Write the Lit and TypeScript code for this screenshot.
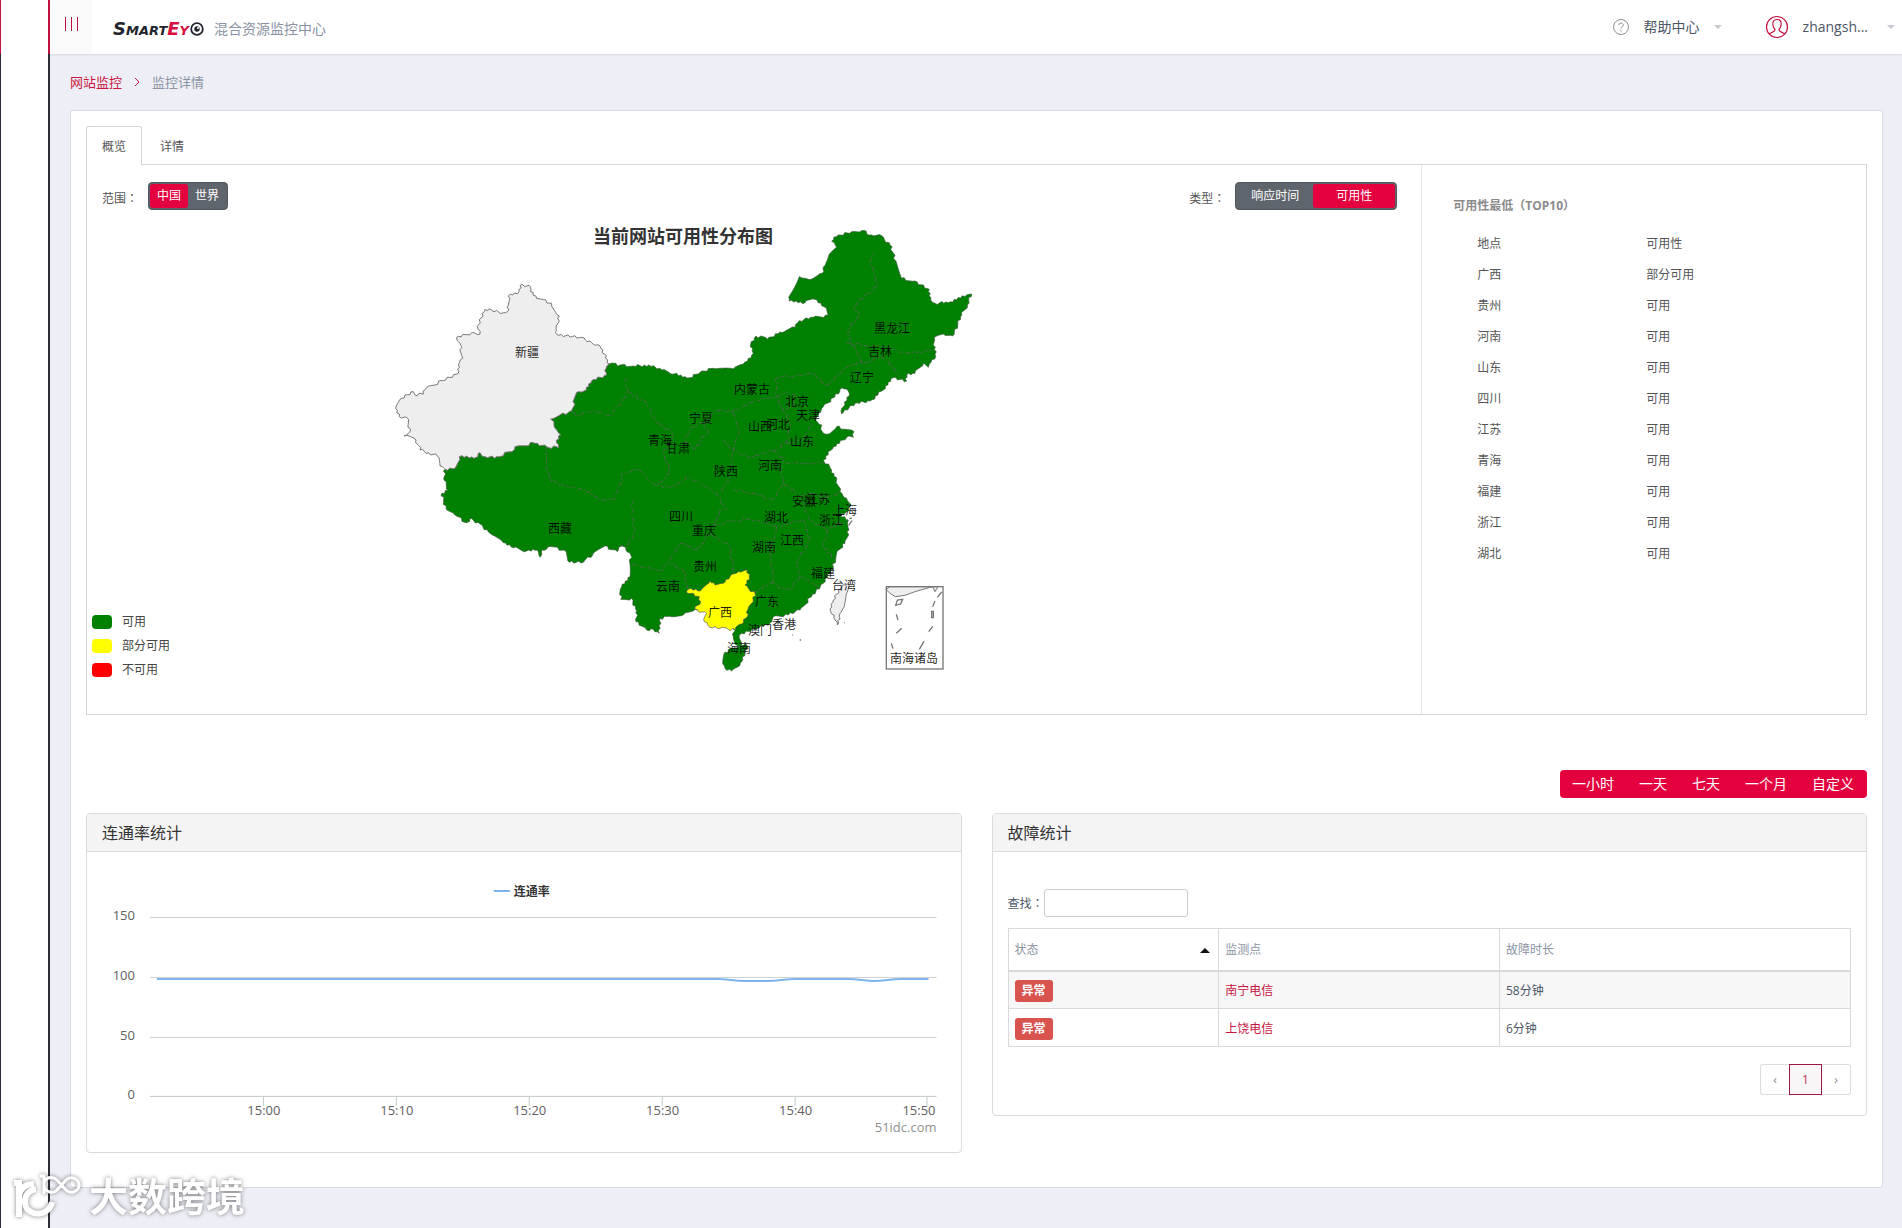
import { LitElement, html, svg, css } from "lit";
import { customElement, state } from "lit/decorators.js";
import { classMap } from "lit/directives/class-map.js";

type Pt = [number, number];

/** Parses "x,y x,y ..." into points. */
const parse = (s: string): Pt[] =>
  s.trim().split(/\s+/).map((p) => p.split(",").map(Number) as Pt);

/** Breaks long edges into short uneven steps so borders look like surveyed lines. */
function rough(src: string, close = true): string {
  const pts = parse(src);
  const out: string[] = [];
  const count = close ? pts.length : pts.length - 1;
  for (let i = 0; i < count; i++) {
    const a = pts[i];
    const b = pts[(i + 1) % pts.length];
    const len = Math.hypot(b[0] - a[0], b[1] - a[1]);
    const n = Math.max(1, Math.round(len / 7));
    const flip = a[0] + a[1] > b[0] + b[1] ? -1 : 1;
    for (let k = 0; k < n; k++) {
      const t = k / n;
      const id = flip > 0 ? k : n - k;
      const seed = Math.sin((a[0] + b[0]) * 12.9 + (a[1] + b[1]) * 78.2 + id * 37.7) * 43758.5;
      const j = k === 0 ? 0 : ((seed - Math.floor(seed)) * 2 - 1) * 4.6 * flip;
      const x = a[0] + (b[0] - a[0]) * t - ((b[1] - a[1]) / len) * j;
      const y = a[1] + (b[1] - a[1]) * t + ((b[0] - a[0]) / len) * j;
      out.push(`${x.toFixed(1)},${y.toFixed(1)}`);
    }
  }
  if (!close) out.push(pts[pts.length - 1].join(","));
  return out.join(" ");
}

const XINJIANG_SOUTH =
  "195,778 225,775 238,740 282,745 300,728 315,740 350,740 400,722 412,708 465,700 500,710 535,713 530,690 542,675 525,655 522,635 512,627 575,603 590,547 612,543 635,512 680,495 678,475 688,462";

const XINJIANG =
  XINJIANG_SOUTH +
  " 660,408 640,403 605,382 530,373 528,355 538,318 515,280 470,265 452,245 447,226 420,227 417,245 385,258 387,300 370,308 315,298 292,350 300,372 275,368 230,382 240,400 248,445 235,465 235,490 190,512 140,532 130,552 105,555 100,545 60,568 47,595 58,620 80,622 90,665 72,678 108,690 120,720 172,738 180,768";

const MAINLAND =
  XINJIANG_SOUTH +
  " 720,465 760,468 820,467 845,480 870,490 915,500 930,503 960,487 1000,475 1060,477 1090,462 1120,430 1112,402 1128,378 1162,388 1200,366 1245,352 1258,332 1300,322 1345,316 1332,290 1305,268 1275,278 1228,273 1226,262 1258,200 1285,208 1327,190 1331,170 1345,140 1370,112 1355,94 1375,75 1415,65 1445,62 1475,75 1505,77 1530,105 1545,150 1565,205 1605,213 1648,238 1652,270 1665,280 1705,278 1760,255 1775,252 1762,285 1745,315 1718,378 1690,372 1662,383 1667,440 1648,462 1645,472 1630,460 1605,490 1580,495 1580,513 1540,503 1510,540 1470,573 1425,580 1385,612 1390,590 1408,550 1400,537 1380,538 1365,560 1330,590 1315,610 1308,632 1325,645 1327,665 1340,673 1370,650 1422,665 1420,682 1400,682 1360,710 1330,750 1355,780 1370,810 1380,845 1400,865 1412,888 1400,905 1380,918 1405,930 1407,960 1395,1000 1370,1030 1360,1070 1330,1120 1295,1160 1260,1200 1225,1215 1180,1220 1170,1240 1130,1255 1085,1270 1078,1285 1083,1308 1065,1302 1060,1280 1065,1262 1020,1200 945,1198 910,1215 875,1220 840,1225 838,1270 820,1258 800,1260 768,1235 770,1202 755,1165 722,1168 725,1130 750,1100 752,1035 738,1020 725,1000 712,1025 675,1008 640,1030 610,1057 568,1057 552,1020 505,1010 485,1020 480,1042 472,1020 440,1023 400,1013 370,998 330,970 300,942 270,925 260,938 225,915 198,895 185,850 205,842 192,810";

const GUANGXI =
  "1065,1260 1045,1258 1020,1255 990,1252 973,1235 980,1210 945,1198 945,1190 962,1175 958,1160 920,1148 925,1138 962,1142 990,1113 1005,1125 1030,1120 1050,1100 1075,1085 1102,1080 1108,1100 1095,1125 1125,1150 1120,1175 1105,1195 1102,1220 1085,1242";

const HAINAN = "1030,1340 1045,1320 1075,1310 1100,1304 1095,1330 1085,1355 1075,1370 1055,1383 1035,1375 1028,1355";
const TAIWAN = "1405,1120 1385,1130 1360,1170 1352,1205 1365,1230 1372,1245 1378,1220 1393,1190 1400,1150";

const BORDERS = [
  "500,710 498,770 515,815 560,828 620,845 665,870 705,865 730,790 775,780 830,828 885,830 925,800 1010,850 1040,900",
  "755,870 762,970 738,1020",
  "735,505 745,545 690,620 640,600 590,620 575,603",
  "745,545 800,580 830,640 870,660 880,690 850,720 870,790 830,828",
  "970,640 935,650 915,690 945,720 960,690 985,670 970,640",
  "970,640 1010,600 1060,605 1130,570 1190,560 1190,500 1240,500 1300,490 1340,530 1400,470 1450,460 1400,370 1440,310 1420,290 1490,230 1470,160 1480,130",
  "1450,460 1510,440 1560,500",
  "1400,400 1500,410 1590,430 1660,420",
  "1030,690 1060,720 1050,800 1020,850",
  "1060,605 1075,660 1060,720 1110,745 1180,720 1220,700 1230,640 1190,560",
  "1190,560 1220,545 1250,560 1235,590 1210,600",
  "1220,700 1270,690 1300,640",
  "1180,720 1220,760 1270,760 1330,758",
  "1060,840 1120,850 1180,870 1210,820 1200,760",
  "1210,820 1260,860 1290,930 1340,960 1400,930",
  "1260,860 1300,850 1330,870 1380,845",
  "1020,900 1000,950 1060,930 1130,930 1190,950 1270,930",
  "755,1060 820,1080 850,1080 870,1050 900,1000 950,1020 990,970",
  "990,970 1050,1010 1060,1090",
  "925,1138 910,1080 870,1060",
  "1125,1150 1170,1120 1230,1140 1260,1100 1320,1130",
  "1190,950 1170,1020 1180,1120",
  "1270,930 1290,990 1250,1060 1260,1100",
  "1340,960 1330,1010 1365,1050",
];

const NINE_DASH = [
  "707,556 712,540 728,538 722,552",
  "709,583 714,600",
  "709,640 725,625",
  "694,670 699,686",
  "778,688 792,664",
  "806,635 818,619",
  "815,574 820,574 820,593 815,593",
  "818,560 825,543",
  "832,532 845,516",
];

const LABELS: [string, number, number][] = [
  ["新疆", 527, 353], ["黑龙江", 892, 329], ["吉林", 880, 352], ["辽宁", 862, 378],
  ["内蒙古", 752, 390], ["北京", 797, 402], ["天津", 808, 416], ["宁夏", 701, 419],
  ["山西", 760, 427], ["河北", 778, 425], ["山东", 802, 442], ["青海", 660, 441],
  ["甘肃", 678, 449], ["陕西", 726, 472], ["河南", 770, 466], ["四川", 681, 517],
  ["重庆", 704, 531], ["西藏", 560, 529], ["安徽", 804, 502], ["江苏", 818, 500],
  ["上海", 845, 511], ["浙江", 831, 521], ["湖北", 776, 518], ["湖南", 764, 548],
  ["江西", 792, 541], ["贵州", 705, 567], ["云南", 668, 587], ["广西", 720, 613],
  ["福建", 823, 574], ["台湾", 844, 586], ["广东", 767, 602], ["香港", 784, 625],
  ["澳门", 760, 631], ["海南", 739, 649], ["南海诸岛", 914, 659],
];

const FONT = css`
  :host {
    font-family: "Open Sans", "Noto Sans CJK SC", sans-serif;
    font-size: 12px;
    line-height: 24px;
    color: #4c5667;
  }
  button, input { font: inherit; }
  * { box-sizing: border-box; }
`;

@customElement("china-map")
class ChinaMap extends LitElement {
  static styles = [FONT, css`
    :host { display: block; width: 600px; }
    svg { display: block; }
    .title { font-size: 18px; font-weight: 700; fill: #333; text-anchor: middle; }
    .name { font-size: 12px; fill: #000; fill-opacity: 0.88; text-anchor: middle; }
    .ok { fill: #008000; stroke: #3c5a3c; stroke-width: 2; }
    .part { fill: #ff0; stroke: #555; stroke-width: 2; }
    .none { fill: #eee; stroke: #777; stroke-width: 3; }
    .line { fill: none; stroke: #4f6650; stroke-width: 3; stroke-dasharray: 14 5 6 5; }
    .frame { fill: none; stroke: #777; stroke-width: 4; }
    .dash { fill: none; stroke: #777; stroke-width: 4; }
  `];

  render() {
    return html`
      <svg width="600" height="476" viewBox="380 214 600 476" role="img" aria-label="当前网站可用性分布图">
        <svg x="380" y="210" width="600" height="480" viewBox="0 0 1800 1440">
          <polygon class="ok" points=${rough(MAINLAND)}></polygon>
          <polygon class="none" points=${rough(XINJIANG)}></polygon>
          ${BORDERS.map((b) => svg`<polyline class="line" points=${rough(b, false)}></polyline>`)}
          <polygon class="part" points=${rough(GUANGXI)}></polygon>
          <polygon class="ok" points=${rough(HAINAN)}></polygon>
          <polygon class="none" points=${rough(TAIWAN)}></polygon>
          <path class="dash" d="M1406 946l10-14M1408 926l8-2M1259 1290h4M1393 1238h2M1236 1275h2"></path>
          <svg x="840" y="630" width="960" height="810" viewBox="0 0 960 810">
            <path class="none" d="M678 508L690 500H818L768 514L735 526L706 530L690 520Z"></path>
            <path class="none" d="M818 500L825 515L834 500Z"></path>
            <rect class="frame" x="679" y="500" width="170" height="247"></rect>
            ${NINE_DASH.map((d) => svg`<polygon class="dash" points=${d}></polygon>`)}
          </svg>
        </svg>
        <text class="title" x="683" y="243">当前网站可用性分布图</text>
        ${LABELS.map(([n, x, y]) => svg`<text class="name" x=${x} y=${y + 4}>${n}</text>`)}
      </svg>
    `;
  }
}

@customElement("rate-chart")
class RateChart extends LitElement {
  static styles = [FONT, css`
    :host { display: block; }
    svg { display: block; width: 100%; height: auto; }
    .grid { fill: #d0d0d0; }
    .axis { fill: #c0c8c8; }
    .series { stroke: #7cb5ec; stroke-width: 2; fill: none; }
    .tick { font-size: 13px; fill: #606060; }
    .end { text-anchor: end; }
    .mid { text-anchor: middle; }
    .legend { font-size: 12px; font-weight: 700; fill: #333; }
    .credit { font-size: 13px; fill: #909090; text-anchor: end; }
  `];

  render() {
    const rows: [string, number][] = [["150", 917], ["100", 977], ["50", 1037], ["0", 1096]];
    const ticks: [string, number][] = [
      ["15:00", 263], ["15:10", 396], ["15:20", 529], ["15:30", 662], ["15:40", 795], ["15:50", 927],
    ];
    return html`
      <svg viewBox="87 852 874 300" role="img" aria-label="连通率">
        <path class="series" d="M494 891H510"></path>
        <text class="legend" x="514" y="896">连通率</text>
        ${rows.map(([t, y]) => svg`
          <rect class=${t === "0" ? "axis" : "grid"} x="150" y=${y} width="787" height="1"></rect>
          <text class="tick end" x="135" y=${y + 3}>${t}</text>`)}
        ${ticks.map(([t, x], i) => svg`
          <rect class="axis" x=${x} y="1097" width="1" height="9"></rect>
          <text class="tick ${i === 5 ? "end" : "mid"}" x=${i === 5 ? 936 : x + 1} y="1115">${t}</text>`)}
        <path class="series" d="M157 979H717C729 979 733 981 745 981H768C780 981 784 979 796 979H848C860 979 864 981 875 981S890 979 902 979H929"></path>
        <text class="credit" x="937" y="1132">51idc.com</text>
      </svg>
    `;
  }
}

@customElement("app-root")
class AppRoot extends LitElement {
  @state() private region = "中国";
  @state() private metric = "可用性";

  static styles = [FONT, css`
    :host { display: block; }
    a { color: #c8143f; text-decoration: none; }
    button { cursor: pointer; border: 0; padding: 0; background: none; color: inherit; }
    .shell { display: flex; min-height: 100vh; background: #eeeff6; }
    .rail { flex: none; width: 50px; background: #fff; border: 0 solid #2c2d38; border-width: 0 2px 0 1px; }
    .rail-cap { height: 54px; margin: 0 -2px 0 -1px; border: 0 solid #c4123f; border-width: 0 2px 0 1px; }
    .page { flex: 1; min-width: 0; }
    .pun { font-family: "Noto Sans CJK TC", sans-serif; }

    .top { display: flex; align-items: center; height: 54px; background: #fff; box-shadow: 0 1px 2px rgba(0, 0, 0, 0.1); font-size: 14px; }
    .burger { width: 42px; height: 54px; background: #fafafa; display: flex; justify-content: center; gap: 5px; padding-top: 17px; }
    .burger i { width: 1px; height: 14px; background: #c0123f; }
    .brand { display: flex; align-items: center; padding: 4px 0 0 21px; }
    .logo { font-family: "DejaVu Sans", sans-serif; font-style: italic; font-weight: 700; font-variant: small-caps; font-size: 18px; color: #22242e; }
    .logo em { color: #d8103f; }
    .brand svg { margin: 0 10px 0 1px; }
    .brand-name { color: #8a93a3; }
    .grow { flex: 1; }
    .menu { display: flex; align-items: center; color: #4c5667; }
    .menu svg { margin-right: 14px; }
    .menu.help { margin-right: 43px; }
    .caret { border: 4px solid transparent; border-top-color: #c5c8ce; border-bottom: 0; margin-left: 14px; }
    .user .caret { margin: 0 7px 0 19px; }

    .crumbs { display: flex; align-items: center; height: 56px; padding: 0 20px; font-size: 13px; color: #8a93a3; }
    .crumbs svg { margin: 0 12px; }
    .card { margin: 0 19px 40px 20px; padding: 15px 15px 34px; background: #fff; border: 1px solid #d9dbe4; border-radius: 3px; }

    .tabs { display: flex; }
    .tab { height: 38px; padding: 2px 17px 0; color: #555; border: 1px solid transparent; border-bottom: 0; }
    .tab.on { height: 39px; margin-bottom: -1px; padding: 1px 15px 0; background: #fff; border-color: #d4d6da; border-radius: 3px 3px 0 0; }
    .pane { display: flex; border: 1px solid #d4d6da; }
    .map { width: 75%; padding: 17px 24px 24px 5px; }
    .bar { display: flex; align-items: flex-start; gap: 10px; padding-left: 10px; height: 32px; }
    .bar .lbl { padding-top: 4px; color: #555; }
    .switch { display: flex; height: 28px; padding: 1px; background: #5f656d; border: 1px solid #51565d; border-radius: 4px; color: #fff; }
    .switch button { height: 24px; line-height: 24px; border-radius: 3px; white-space: nowrap; }
    .switch .on { background: #e4003f; }
    .narrow button { width: 38px; }
    .wide button { width: 76px; }
    .wide button + button { width: 82px; }
    .stage { display: flex; align-items: flex-end; }
    .legend { list-style: none; margin: 0 0 8px; padding: 0; width: 288px; color: #444; }
    .legend li { display: flex; align-items: center; gap: 10px; height: 24px; }
    .key { width: 20px; height: 14px; border-radius: 4px; }
    .key.ok { background: #008000; }
    .key.part { background: #ff0; }
    .key.off { background: #f00; }

    .side { flex: 1; padding: 28px 0 0 31px; border-left: 1px solid #e6e7ea; color: #555; }
    .side h3 { margin: 0 0 10px; font-size: 12px; line-height: 24px; color: #8b8b8b; }
    .rank { width: 100%; border-collapse: collapse; table-layout: fixed; }
    .rank th, .rank td { height: 31px; padding: 0 0 0 24px; text-align: left; font-weight: 400; }
    .rank th:first-child { width: 169px; }

    .range-row { display: flex; justify-content: flex-end; margin: 55px 0 15px; }
    .ranges { display: flex; height: 28px; background: #e4003f; border-radius: 4px; color: #fff; font-size: 14px; }
    .ranges button { padding: 0 13px 0 12px; }

    .cols { display: grid; grid-template-columns: 1fr 1fr; gap: 30px; align-items: start; }
    .panel { border: 1px solid #dcdcdc; border-radius: 4px; overflow: hidden; }
    .panel h2 { margin: 0; height: 38px; padding: 0 15px; font-size: 16px; line-height: 38px; font-weight: 400; color: #333; background: #f4f4f4; border-bottom: 1px solid #dcdcdc; }
    .body { padding: 37px 15px 20px; }
    .find { display: flex; align-items: center; margin-bottom: 11px; }
    .find input { width: 144px; height: 28px; border: 1px solid #ccc; border-radius: 3px; background: #fff; padding: 0 6px; }
    .faults { width: 100%; border-collapse: collapse; table-layout: fixed; }
    .faults th, .faults td { border: 1px solid #d9d9d9; padding: 2px 6px 0; text-align: left; font-weight: 400; }
    .faults th { height: 42px; color: #8a93a3; border-bottom-width: 2px; }
    .faults td { height: 38px; }
    .faults .c1 { width: 25%; }
    .faults .c2 { width: calc(100% / 3); }
    .faults tbody tr:first-child { background: #f7f7f7; }
    .sort { display: flex; width: 100%; align-items: center; justify-content: space-between; }
    .sort i { border: 5px solid transparent; border-top: 0; border-bottom-color: #111; margin-right: 2px; }
    .badge { display: inline-block; height: 22px; line-height: 22px; padding: 0 7px; border-radius: 3px; background: #d9534f; color: #fff; font-weight: 700; }
    .pager { display: flex; justify-content: flex-end; margin-top: 17px; }
    .pager button { width: 29px; height: 31px; border: 1px solid #ddd; color: #888; }
    .pager button:first-child { border-radius: 3px 0 0 3px; border-right: 0; }
    .pager button:last-child { border-radius: 0 3px 3px 0; border-left: 0; }
    .pager .on { width: 33px; border-color: #a01848; background: #faf5f7; color: #c03050; }

    .mark { position: absolute; left: 12px; top: 1170px; display: flex; align-items: center; gap: 7px; color: #fff; pointer-events: none; filter: drop-shadow(0 0 2px rgba(0, 0, 0, 0.5)); }
    .mark span { font-size: 39px; line-height: 52px; font-weight: 700; }
  `];

  private option(name: string, current: string, pick: (v: string) => void) {
    return html`<button type="button" class=${classMap({ on: name === current })}
      aria-pressed=${name === current} @click=${() => pick(name)}>${name}</button>`;
  }

  render() {
    const rank = [
      ["广西", "部分可用"], ["贵州", "可用"], ["河南", "可用"], ["山东", "可用"], ["四川", "可用"],
      ["江苏", "可用"], ["青海", "可用"], ["福建", "可用"], ["浙江", "可用"], ["湖北", "可用"],
    ];
    const faults = [["南宁电信", "58分钟"], ["上饶电信", "6分钟"]];
    const colon = html`<span class="pun">：</span>`;
    return html`
      <div class="shell">
        <aside class="rail"><div class="rail-cap"></div></aside>
        <div class="page">
          <header class="top">
            <button class="burger" type="button" aria-label="菜单"><i></i><i></i><i></i></button>
            <div class="brand">
              <span class="logo">Smart<em>Ey</em></span>
              <svg width="14" height="14" viewBox="0 0 14 14">
                <circle cx="7" cy="7" r="5.8" fill="none" stroke="#22242e" stroke-width="1.8"></circle>
                <circle cx="7" cy="7" r="2.7" fill="#22242e"></circle>
                <circle cx="8" cy="6" r="1" fill="#fff"></circle>
              </svg>
              <span class="brand-name">混合资源监控中心</span>
            </div>
            <div class="grow"></div>
            <button class="menu help" type="button">
              <svg width="18" height="18" viewBox="0 0 18 18" fill="none" stroke="#8a8f98">
                <circle cx="9" cy="9" r="7.5"></circle>
                <path d="M6.8 7.2c0-3 4.6-2.8 4.4 0C11.1 8.8 9 8.9 9 10.8M9 12.2v1.3"></path>
              </svg>
              帮助中心<i class="caret"></i>
            </button>
            <button class="menu user" type="button">
              <svg width="24" height="24" viewBox="0 0 24 24" fill="none" stroke="#c4123f" stroke-width="1.2">
                <circle cx="12" cy="12" r="10.5"></circle>
                <path d="M4.5 19c1.5-2 5.5-1.5 5.500-4.500C8 12.500 7.500 10 8 7.500c.6-4 7.400-4 8 0 .5 2.500 0 5-2 7 0 3 4 2.500 5.500 4.500"></path>
              </svg>
              zhangsh...<i class="caret"></i>
            </button>
          </header>

          <nav class="crumbs">
            <a href="#sites">网站监控</a>
            <svg width="6" height="10" viewBox="0 0 6 10" fill="none" stroke="#c4123f"><path d="M1 1l4 4-4 4"></path></svg>
            <span>监控详情</span>
          </nav>

          <main class="card">
            <div class="tabs" role="tablist">
              <button class="tab on" role="tab" aria-selected="true">概览</button>
              <button class="tab" role="tab" aria-selected="false">详情</button>
            </div>
            <section class="pane">
              <div class="map">
                <div class="bar">
                  <span class="lbl">范围${colon}</span>
                  <div class="switch narrow" role="group" aria-label="范围">
                    ${["中国", "世界"].map((n) => this.option(n, this.region, (v) => (this.region = v)))}
                  </div>
                  <div class="grow"></div>
                  <span class="lbl">类型${colon}</span>
                  <div class="switch wide" role="group" aria-label="类型">
                    ${["响应时间", "可用性"].map((n) => this.option(n, this.metric, (v) => (this.metric = v)))}
                  </div>
                </div>
                <div class="stage">
                  <ul class="legend">
                    <li><i class="key ok"></i>可用</li>
                    <li><i class="key part"></i>部分可用</li>
                    <li><i class="key off"></i>不可用</li>
                  </ul>
                  <china-map></china-map>
                </div>
              </div>
              <div class="side">
                <h3>可用性最低<span class="pun">（</span>TOP10<span class="pun">）</span></h3>
                <table class="rank">
                  <thead><tr><th>地点</th><th>可用性</th></tr></thead>
                  <tbody>${rank.map(([a, b]) => html`<tr><td>${a}</td><td>${b}</td></tr>`)}</tbody>
                </table>
              </div>
            </section>

            <div class="range-row">
              <div class="ranges">
                ${["一小时", "一天", "七天", "一个月", "自定义"].map((t) => html`<button type="button">${t}</button>`)}
              </div>
            </div>

            <div class="cols">
              <section class="panel">
                <h2>连通率统计</h2>
                <rate-chart></rate-chart>
              </section>
              <section class="panel">
                <h2>故障统计</h2>
                <div class="body">
                  <div class="find"><label for="find">查找${colon}</label><input id="find" type="text" /></div>
                  <table class="faults">
                    <thead>
                      <tr>
                        <th class="c1"><button class="sort" type="button">状态<i></i></button></th>
                        <th class="c2">监测点</th>
                        <th>故障时长</th>
                      </tr>
                    </thead>
                    <tbody>
                      ${faults.map(([p, d]) => html`<tr>
                        <td><span class="badge">异常</span></td>
                        <td><a href="#point">${p}</a></td>
                        <td>${d}</td>
                      </tr>`)}
                    </tbody>
                  </table>
                  <div class="pager">
                    <button type="button" aria-label="上一页">‹</button>
                    <button type="button" class="on">1</button>
                    <button type="button" aria-label="下一页">›</button>
                  </div>
                </div>
              </section>
            </div>
          </main>
        </div>
      </div>
      <div class="mark">
        <svg width="70" height="50" viewBox="0 0 70 50" fill="none" stroke="#fff">
          <path stroke-width="6" d="M2 12h5V46M7 24c2-8 8-11 15-11"></path>
          <path stroke-width="6" d="M40 31c-3 16-27 15-27 0 0-8 5-12 11-13"></path>
          <path stroke-width="3" d="M28 5h4V23M32 12c1-5 8-8 13-3l9 10c5 5 13 1 13-5s-8-10-13-5l-9 10c-5 5-13 1-13-5"></path>
        </svg>
        <span>大数跨境</span>
      </div>
    `;
  }
}
